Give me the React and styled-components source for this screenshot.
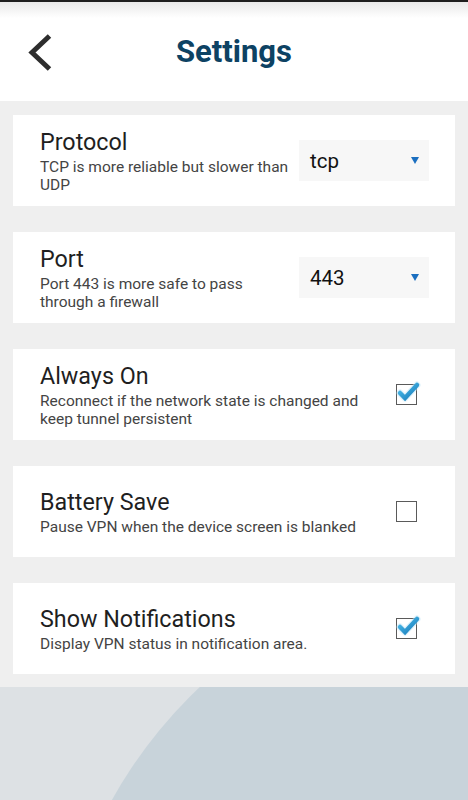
import React, { useState } from 'react';
import styled, { createGlobalStyle } from 'styled-components';

const Global = createGlobalStyle`
  html, body { margin: 0; padding: 0; background: #efefef; }
  body { font-family: Roboto, "Noto Sans", sans-serif; }
  * { box-sizing: border-box; }
`;

const Screen = styled.div`
  width: 468px;
  height: 800px;
  display: flex;
  flex-direction: column;
  overflow: hidden;
  background: #efefef;
`;

const Header = styled.header`
  height: 101px;
  flex-shrink: 0;
  background: linear-gradient(#1e1e1e 0, #1e1e1e 2px, #e9e9e9 2px, #ffffff 18px, #ffffff);
  display: flex;
  align-items: center;
  position: relative;
  padding-top: 3px;
`;

const Back = styled.button`
  width: 60px;
  height: 60px;
  margin-left: 9px;
  border: none;
  background: none;
  padding: 0;
  display: flex;
  align-items: center;
  justify-content: center;
  cursor: pointer;
`;

const Title = styled.h1`
  position: absolute;
  left: 0;
  right: 0;
  top: 34px;
  margin: 0;
  text-align: center;
  font-size: 31px;
  line-height: 36px;
  font-weight: 700;
  color: #0d4263;
  pointer-events: none;
`;

const List = styled.main`
  display: flex;
  flex-direction: column;
  gap: 26px;
  padding: 14px 13px 13px;
`;

const Card = styled.section`
  height: 91px;
  background: #fff;
  display: flex;
  align-items: center;
  padding: 0 ${p => (p.$select ? 26 : 37)}px 0 27px;
`;

const Text = styled.div`
  flex: 1;
  min-width: 0;
  padding-top: 2px;
`;

const Name = styled.div`
  font-size: 23.3px;
  line-height: 26px;
  color: #1f1f1f;
  margin-bottom: 3px;
`;

const Desc = styled.div`
  font-size: 15.5px;
  line-height: 18px;
  color: #444;
  max-width: ${p => p.$wide ? 335 : 258}px;
`;

const Select = styled.div`
  width: 130px;
  height: 41px;
  flex-shrink: 0;
  margin-left: 8px;
  background: #f7f7f7;
  display: flex;
  align-items: center;
  justify-content: space-between;
  padding: 0 10px 0 11px;
  font-size: 20.5px;
  color: #111;
  cursor: pointer;
`;

const Arrow = styled.span`
  width: 0;
  height: 0;
  border-left: 4px solid transparent;
  border-right: 4px solid transparent;
  border-top: 7px solid #1b6fc0;
  margin-bottom: 1px;
`;

const Check = styled.button`
  width: 22px;
  height: 22px;
  flex-shrink: 0;
  margin-left: 12px;
  border: none;
  background: none;
  padding: 0;
  position: relative;
  cursor: pointer;
`;

const Footer = styled.div`
  flex: 1;
  background: #dde1e4;
  overflow: hidden;
  svg { display: block; }
`;

function CheckBox({ on, onClick }) {
  return (
    <Check onClick={onClick}>
      <svg width="30" height="30" viewBox="0 0 30 30" style={{ position: 'absolute', left: 0, top: -4, overflow: 'visible' }}>
        <defs>
          <linearGradient id="chk" x1="0" y1="0" x2="1" y2="1">
            <stop offset="0" stopColor="#4fc1ef" />
            <stop offset="1" stopColor="#1679b8" />
          </linearGradient>
        </defs>
        <rect x="0.5" y="4.5" width="20" height="20" fill="#fff" stroke="#5a5a5a" strokeWidth="1" />
        {on && (
          <>
            <path d="M4 13 L9 18 L21 5" fill="none" stroke="#bfe6f7" strokeWidth="7" strokeLinecap="round" strokeLinejoin="round" opacity="0.5" />
            <path d="M4 13 L9 18 L21 5" fill="none" stroke="url(#chk)" strokeWidth="4.5" strokeLinecap="round" strokeLinejoin="miter" />
          </>
        )}
      </svg>
    </Check>
  );
}

export default function App() {
  const [opts, setOpts] = useState({ always: true, battery: false, notify: true });
  const toggle = k => setOpts(o => ({ ...o, [k]: !o[k] }));

  return (
    <Screen>
      <Global />
      <Header>
        <Back aria-label="back">
          <svg width="28" height="40" viewBox="0 0 28 40">
            <path d="M24.5 4 L7 20.5 L24.5 37" fill="none" stroke="#2d2d2d" strokeWidth="5" />
          </svg>
        </Back>
        <Title>Settings</Title>
      </Header>
      <List>
        <Card $select>
          <Text>
            <Name>Protocol</Name>
            <Desc>TCP is more reliable but slower than UDP</Desc>
          </Text>
          <Select>tcp<Arrow /></Select>
        </Card>
        <Card $select>
          <Text>
            <Name>Port</Name>
            <Desc>Port 443 is more safe to pass through a firewall</Desc>
          </Text>
          <Select>443<Arrow /></Select>
        </Card>
        <Card>
          <Text>
            <Name>Always On</Name>
            <Desc $wide>Reconnect if the network state is changed and keep tunnel persistent</Desc>
          </Text>
          <CheckBox on={opts.always} onClick={() => toggle('always')} />
        </Card>
        <Card>
          <Text>
            <Name>Battery Save</Name>
            <Desc $wide>Pause VPN when the device screen is blanked</Desc>
          </Text>
          <CheckBox on={opts.battery} onClick={() => toggle('battery')} />
        </Card>
        <Card>
          <Text>
            <Name>Show Notifications</Name>
            <Desc $wide>Display VPN status in notification area.</Desc>
          </Text>
          <CheckBox on={opts.notify} onClick={() => toggle('notify')} />
        </Card>
      </List>
      <Footer>
        <svg width="468" height="120" viewBox="0 0 468 120">
          <circle cx="520" cy="340" r="467" fill="#c8d3da" />
        </svg>
      </Footer>
    </Screen>
  );
}
